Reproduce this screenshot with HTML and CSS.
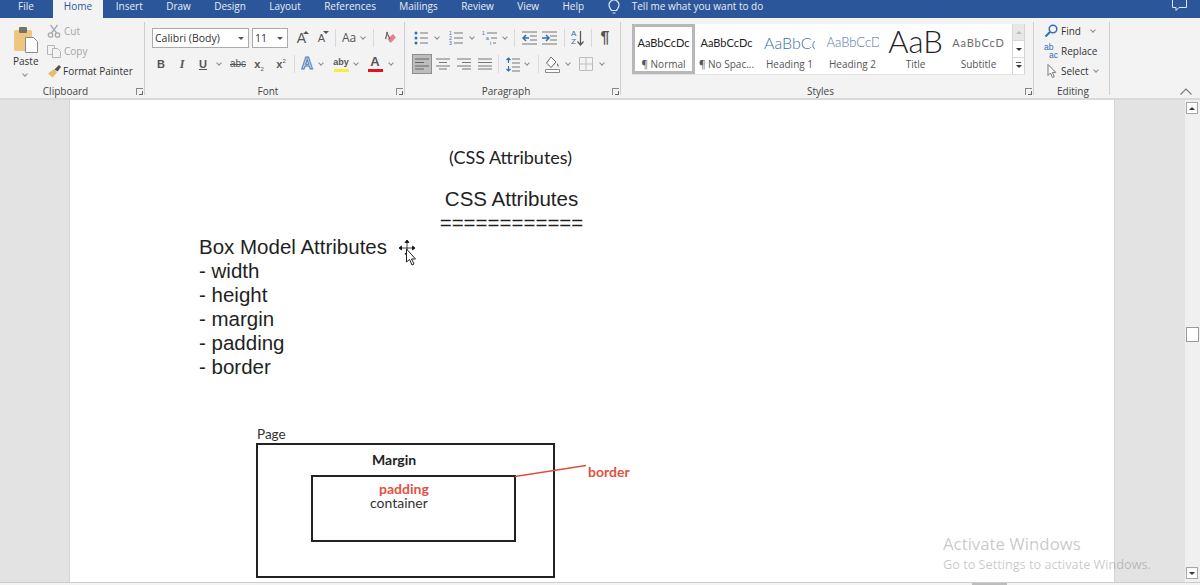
FILE: index.html
```html
<!DOCTYPE html>
<html lang="en">
<head>
    <meta charset="UTF-8">
    <meta name="viewport" content="width=device-width, initial-scale=1.0">
    <title>Document - Word</title>
    <link rel="stylesheet" href="styles.css">
</head>
<body>
    <!-- Tabs -->
    <header class="tabs">
        <span class="tab tab-file">File</span>
        <span class="tab tab-active">Home</span>
        <span class="tab">Insert</span>
        <span class="tab">Draw</span>
        <span class="tab">Design</span>
        <span class="tab">Layout</span>
        <span class="tab">References</span>
        <span class="tab">Mailings</span>
        <span class="tab">Review</span>
        <span class="tab">View</span>
        <span class="tab">Help</span>
        <svg class="bulb" width="12" height="15" viewBox="0 0 12 15"><path d="M3.500 10.500C2.500 8.500 1 7.500 1 5a5 5 0 0 1 10 0c0 2.500-1.500 3.500-2.500 5.500zM4.500 13h3" fill="none" stroke="#dfe7f3" stroke-width="1.200"/></svg>
        <span class="tell">Tell me what you want to do</span>
        <svg class="comment" width="15" height="11" viewBox="0 0 15 11"><path d="M.5 0v7.500h3.500v3l3-3h7.500V0" fill="none" stroke="#dfe7f3"/></svg>
    </header>

    <!-- Ribbon -->
    <section class="ribbon">
        <div class="group group-clip">
            <div class="group-body clip-body">
                <div class="paste">
                    <svg width="26" height="27" viewBox="0 0 26 27">
                        <rect x="1" y="4" width="18" height="21" rx="1.500" fill="#eec77e"/>
                        <rect x="6" y="1" width="8" height="6" rx="1" fill="#77736c"/>
                        <path d="M12.500 11.500h8l4 4v11h-12z" fill="#fff" stroke="#8a8a8a"/>
                    </svg>
                    <span>Paste</span>
                    <i class="chev"></i>
                </div>
                <div class="clip-list">
                    <div class="clip-item off">
                        <svg width="14" height="14" viewBox="0 0 14 14"><g fill="none" stroke="#a9a9a9" stroke-width="1.300"><circle cx="3.500" cy="11" r="2.200"/><circle cx="10.500" cy="11" r="2.200"/><path d="M4.500 9 10.500 1M9.500 9 3.500 1"/></g></svg>
                        <span>Cut</span>
                    </div>
                    <div class="clip-item off">
                        <svg width="14" height="14" viewBox="0 0 14 14"><g fill="#f3f3f3" stroke="#b5b5b5"><path d="M.5 1.500h7v9h-7z"/><path d="M5.500 4.500h5l3 3v6h-8z"/></g></svg>
                        <span>Copy</span>
                    </div>
                    <div class="clip-item">
                        <svg width="15" height="14" viewBox="0 0 15 14"><path d="M1 9.500 7 5l3 3.500-4.500 5z" fill="#e5bd6b"/><path d="M7.500 5.500 12 1l2 2-3.500 4.500z" fill="#55514a"/></svg>
                        <span>Format Painter</span>
                    </div>
                </div>
            </div>
            <div class="group-label"><span></span><span>Clipboard</span><i class="launcher"></i></div>
        </div>

        <div class="group">
            <div class="group-body tools">
                <div class="row">
                    <div class="combo combo-font"><span>Calibri (Body)</span><i class="caret"></i></div>
                    <div class="combo combo-size m3"><span>11</span><i class="caret"></i></div>
                    <span class="ico w15 m6 big-a">A<sup class="up"></sup></span>
                    <span class="ico w15 m5 small-a">A<sup class="down"></sup></span>
                    <i class="sep m6"></i>
                    <span class="ico w14 m6 aa">Aa</span>
                    <i class="chev m3"></i>
                    <i class="sep m7"></i>
                    <svg class="m8" width="14" height="15" viewBox="0 0 14 15"><path d="M5.500 8 11 3l3 3.500L8.500 12z" fill="#e57f8a"/><path d="M3.500 8 5.500 1" stroke="#6b6b6b" stroke-width="1.300"/><path d="M4.500 1 8 8" stroke="#6b6b6b" stroke-width="1.300"/></svg>
                </div>
                <div class="row">
                    <span class="ico w12 m3 bold">B</span>
                    <span class="ico w12 m9 ital">I</span>
                    <span class="ico w12 m9 under">U</span>
                    <i class="chev m6"></i>
                    <span class="ico w20 m6 strike">abc</span>
                    <span class="ico w12 m5 bold">x<sub>2</sub></span>
                    <span class="ico w12 m10 bold">x<sup>2</sup></span>
                    <i class="sep m7"></i>
                    <span class="ico w14 m5 effect">A</span>
                    <i class="chev m3"></i>
                    <span class="ico w16 m9 mark"><small>aby</small><b class="bar bar-yellow"></b></span>
                    <i class="chev m3"></i>
                    <span class="ico w16 m8 mark"><em>A</em><b class="bar bar-red"></b></span>
                    <i class="chev m4"></i>
                </div>
            </div>
            <div class="group-label"><span></span><span>Font</span><i class="launcher"></i></div>
        </div>

        <div class="group group-para">
            <div class="group-body tools">
                <div class="row">
                    <svg class="m2" width="14" height="14" viewBox="0 0 14 14"><g fill="#2f6fb3"><circle cx="2" cy="2" r="1.500"/><circle cx="2" cy="7" r="1.500"/><circle cx="2" cy="12" r="1.500"/></g><path d="M6 2h8M6 7h8M6 12h8" stroke="#777"/></svg>
                    <i class="chev m5"></i>
                    <svg class="m9" width="14" height="14" viewBox="0 0 14 14"><g fill="#2f6fb3" font-size="5" font-family="Liberation Sans, sans-serif"><text x="0" y="4">1</text><text x="0" y="9">2</text><text x="0" y="14">3</text></g><path d="M5 2h9M5 7h9M5 12h9" stroke="#777"/></svg>
                    <i class="chev m5"></i>
                    <svg class="m7" width="15" height="14" viewBox="0 0 15 14"><g fill="#2f6fb3" font-size="5" font-family="Liberation Sans, sans-serif"><text x="0" y="4">1</text><text x="4" y="9">a</text><text x="8" y="14">i</text></g><path d="M5 2h10M9 7h6M11 12h3" stroke="#777"/></svg>
                    <i class="chev m4"></i>
                    <i class="sep m6"></i>
                    <svg class="m7" width="15" height="14" viewBox="0 0 15 14"><path d="M0 1h15M0 13h15M8 5h7M8 9h7" stroke="#777"/><path d="M7 7H1M4 4 1 7l3 3" fill="none" stroke="#2f6fb3" stroke-width="1.500"/></svg>
                    <svg class="m5" width="15" height="14" viewBox="0 0 15 14"><path d="M0 1h15M0 13h15M8 5h7M8 9h7" stroke="#777"/><path d="M0 7h6M4 4l3 3-3 3" fill="none" stroke="#2f6fb3" stroke-width="1.500"/></svg>
                    <i class="sep m7"></i>
                    <span class="sort m6"><span class="sort-az">A<br>Z</span><svg width="7" height="15" viewBox="0 0 7 15"><path d="M3.500 0v14M.5 10.500l3 3.500 3-3.500" fill="none" stroke="#555" stroke-width="1.200"/></svg></span>
                    <i class="sep m6"></i>
                    <span class="ico w12 m7 pilcrow">¶</span>
                </div>
                <div class="row">
                    <span class="align-on"><svg width="14" height="12" viewBox="0 0 14 12"><path d="M0 1h14M0 4.500h9M0 8h14M0 11h9" stroke="#666"/></svg></span>
                    <svg class="m4" width="14" height="12" viewBox="0 0 14 12"><path d="M0 1h14M3 4.500h8M0 8h14M3 11h8" stroke="#777"/></svg>
                    <svg class="m7" width="14" height="12" viewBox="0 0 14 12"><path d="M0 1h14M5 4.500h9M0 8h14M5 11h9" stroke="#777"/></svg>
                    <svg class="m7" width="14" height="12" viewBox="0 0 14 12"><path d="M0 1h14M0 4.500h14M0 8h14M0 11h14" stroke="#777"/></svg>
                    <i class="sep m6"></i>
                    <svg class="m7" width="14" height="15" viewBox="0 0 14 15"><path d="M6 2h8M6 6h8M6 10h8M6 14h8" stroke="#777"/><path d="M2.500 1v5M.5 3l2-2 2 2" fill="none" stroke="#2f6fb3" stroke-width="1.200"/><path d="M2.500 9v5M.5 12l2 2 2-2" fill="none" stroke="#2f6fb3" stroke-width="1.200"/></svg>
                    <i class="chev m3"></i>
                    <i class="sep m8"></i>
                    <svg class="m6" width="15" height="17" viewBox="0 0 15 17"><path d="M6 1 1.500 7 6 11.500 11 6z" fill="#fff" stroke="#666"/><path d="M12 7c1.500 1.500 2 3 1.500 3.500s-1.500 0-1.500-3.500z" fill="#666"/><path d="M.5 13.500h14v3H.5z" fill="#fff" stroke="#8a8a8a"/></svg>
                    <i class="chev m4"></i>
                    <svg class="m8" width="14" height="14" viewBox="0 0 14 14"><path d="M.5.500h13v13H.5zM7 .5v13M.5 7h13" fill="none" stroke="#bdbdbd"/></svg>
                    <i class="chev m5"></i>
                </div>
            </div>
            <div class="group-label"><span></span><span>Paragraph</span><i class="launcher"></i></div>
        </div>

        <div class="group group-styles">
            <div class="group-body">
                <div class="gallery">
                    <div class="style style-on"><div class="preview pv-normal">AaBbCcDc</div><div class="style-name">¶ Normal</div></div>
                    <div class="style"><div class="preview pv-normal">AaBbCcDc</div><div class="style-name">¶ No Spac...</div></div>
                    <div class="style"><div class="preview pv-h1">AaBbCc</div><div class="style-name">Heading 1</div></div>
                    <div class="style"><div class="preview pv-h2">AaBbCcD</div><div class="style-name">Heading 2</div></div>
                    <div class="style"><div class="preview pv-title">AaB</div><div class="style-name">Title</div></div>
                    <div class="style"><div class="preview pv-sub">AaBbCcD</div><div class="style-name">Subtitle</div></div>
                    <div class="gallery-scroll">
                        <span class="gs gs-up"><i class="tri-up"></i></span>
                        <span class="gs"><i class="tri-down"></i></span>
                        <span class="gs gs-more"><i class="tri-down"></i></span>
                    </div>
                </div>
            </div>
            <div class="group-label"><span></span><span>Styles</span><i class="launcher"></i></div>
        </div>

        <div class="group group-edit">
            <div class="group-body edit-list">
                <div class="edit-item">
                    <svg width="14" height="14" viewBox="0 0 14 14"><circle cx="9" cy="5" r="3.800" fill="none" stroke="#2f6fb3" stroke-width="1.500"/><path d="M6 8 1.500 12.500" stroke="#2f6fb3" stroke-width="2"/></svg>
                    <span>Find</span><i class="chev"></i>
                </div>
                <div class="edit-item">
                    <span class="replace-ico"><span>ab</span><span>ac</span></span>
                    <span>Replace</span>
                </div>
                <div class="edit-item">
                    <svg width="14" height="14" viewBox="0 0 14 14"><path d="M4 .5v11l2.500-2.500 2 4.500 1.800-.8-2-4.300h3.500z" fill="#fff" stroke="#777"/></svg>
                    <span>Select</span><i class="chev"></i>
                </div>
            </div>
            <div class="group-label"><span>Editing</span></div>
        </div>

        <svg class="collapse" width="12" height="7" viewBox="0 0 12 7"><path d="M.5 6.500 6 1l5.500 5.500" fill="none" stroke="#777" stroke-width="1.100"/></svg>
    </section>

    <!-- Document area -->
    <main class="workspace">
        <div class="margin-left"></div>
        <article class="page">
            <p class="cal-title">(CSS Attributes)</p>
            <div class="heading">
                <p>CSS Attributes</p>
                <p>============</p>
            </div>
            <ul class="attrs">
                <li>Box Model Attributes</li>
                <li>- width</li>
                <li>- height</li>
                <li>- margin</li>
                <li>- padding</li>
                <li>- border</li>
            </ul>
            <figure class="diagram">
                <figcaption>Page</figcaption>
                <div class="box-page">
                    <div class="label-margin">Margin</div>
                    <div class="box-container">
                        <div class="label-padding">padding</div>
                        <div class="label-container">container</div>
                    </div>
                </div>
                <svg class="border-line" width="72" height="14" viewBox="0 0 72 14"><path d="M0 12.500 71 1.500" stroke="#d9503f" stroke-width="1.500"/></svg>
                <span class="label-border">border</span>
            </figure>
            <!-- Курсор -->
            <svg class="cursor" width="20" height="28" viewBox="0 0 20 28">
                <path d="M8 1v14M1 8h14M8 0 6 2.500h4zM8 16l-2-2.500h4zM0 8l2.500-2v4zM16 8l-2.500-2v4z" fill="#111" stroke="#111" stroke-width=".8"/>
                <path d="M7.500 9v13l3-2.500 2.500 5.500 2-1-2.500-5h4z" fill="#fff" stroke="#222"/>
            </svg>
        </article>
        <div class="margin-right"></div>
        <aside class="vscroll">
            <span class="sb-btn"><i class="tri-up"></i></span>
            <span class="sb-thumb"></span>
            <span class="sb-btn"><i class="tri-down"></i></span>
        </aside>
    </main>

    <footer class="hscroll"><span class="hthumb"></span></footer>

    <div class="activate">
        <div class="activate-title">Activate Windows</div>
        <div class="activate-sub">Go to Settings to activate Windows.</div>
    </div>
</body>
</html>
```

FILE: styles.css
```css
* {
    box-sizing: border-box;
}

html, body {
    height: 585px;
    overflow: hidden;
}

body {
    margin: 0;
    position: relative;
    display: flex;
    flex-direction: column;
    font-family: "Open Sans", sans-serif;
    color: #444;
    background: #f3f3f3;
}

p {
    margin: 0;
}

/* Tabs */
.tabs {
    height: 18px;
    flex: none;
    display: flex;
    align-items: flex-start;
    background: #2b579a;
    color: #e6ecf5;
    font-size: 10px;
    line-height: 12px;
    overflow: hidden;
}

.tab {
    padding: 0 11.700px;
    height: 18px;
}

.tab-file {
    padding: 0 19px 0 18px;
}

.tab-active {
    padding: 0 11px;
    margin-right: 1px;
    background: #f3f3f3;
    color: #2b579a;
}

.bulb {
    margin: 0 0 0 12px;
    flex: none;
}

.tell {
    margin-left: 12px;
}

.comment {
    margin-left: auto;
    margin-right: 13px;
}

/* Ribbon */
.ribbon {
    height: 82px;
    flex: none;
    display: flex;
    position: relative;
    border-bottom: 2px solid #d9d9d9;
    font-size: 10px;
}

.group {
    width: 260px;
    display: flex;
    flex-direction: column;
    position: relative;
}

.group::after {
    content: "";
    position: absolute;
    right: 0;
    top: 4px;
    bottom: 3px;
    width: 1px;
    background: #cfcfcf;
}

.group-clip {
    width: 145px;
}

.group-para {
    width: 216px;
}

.group-styles {
    width: 413px;
}

.group-edit {
    width: 76px;
}

.group-body {
    height: 67px;
}

.group-label {
    height: 13px;
    display: grid;
    grid-template-columns: 1fr auto 1fr;
    padding-right: 14px;
    align-items: center;
    line-height: 13px;
    text-align: center;
    color: #444;
}

.group-edit .group-label {
    display: block;
    padding-right: 0;
    padding-left: 2px;
}

.launcher {
    justify-self: end;
    margin-right: -12px;
    width: 7px;
    height: 7px;
    border-left: 1px solid #888;
    border-top: 1px solid #888;
    position: relative;
}

.launcher::after {
    content: "";
    position: absolute;
    right: 0;
    bottom: 0;
    width: 3px;
    height: 3px;
    border-right: 1px solid #666;
    border-bottom: 1px solid #666;
}

/* Clipboard */
.clip-body {
    display: flex;
    padding-top: 8px;
}

.paste {
    width: 47px;
    padding-left: 13px;
    display: flex;
    flex-direction: column;
    align-items: flex-start;
    font-size: 10px;
    line-height: 14px;
    color: #333;
}

.paste svg {
    margin-bottom: 1px;
}

.paste .chev {
    margin: 4px 0 0 8px;
}

.clip-list {
    display: flex;
    flex-direction: column;
    gap: 6px;
    margin-top: -2px;
}

.clip-item {
    height: 14px;
    display: flex;
    align-items: center;
    gap: 1px;
    line-height: 14px;
    color: #333;
    white-space: nowrap;
    font-size: 10px;
}

.clip-item.off {
    color: #a5a5a5;
    gap: 3px;
}

/* Font and paragraph tools */
.tools {
    padding: 10px 0 0 7px;
    display: flex;
    flex-direction: column;
    gap: 6px;
}

.row {
    height: 20px;
    display: flex;
    align-items: center;
}

.row > * {
    flex: none;
}

.combo {
    height: 20px;
    display: flex;
    align-items: center;
    justify-content: space-between;
    padding: 0 4px 0 2px;
    background: #fff;
    border: 1px solid #ababab;
    font-size: 10.500px;
    color: #333;
}

.combo-font {
    width: 97px;
}

.combo-size {
    width: 36px;
}

.caret {
    border: 3px solid transparent;
    border-top: 3px solid #555;
    border-bottom: 0;
}

.chev {
    display: block;
    width: 7px;
    height: 5px;
    position: relative;
}

.chev::after {
    content: "";
    position: absolute;
    left: 2px;
    top: -.5px;
    width: 3px;
    height: 3px;
    border-right: 1px solid #8c8c8c;
    border-bottom: 1px solid #8c8c8c;
    transform: rotate(45deg);
}

.sep {
    width: 1px;
    height: 18px;
    background: #d8d8d8;
}

.ico {
    display: block;
    text-align: center;
    font-family: "Liberation Sans", sans-serif;
    color: #555;
    line-height: 20px;
    font-size: 12px;
    position: relative;
}

.w12 { width: 12px; }
.w14 { width: 14px; }
.w15 { width: 15px; }
.w16 { width: 16px; }
.w20 { width: 20px; }

.m2 { margin-left: 2px; }
.m3 { margin-left: 3px; }
.m4 { margin-left: 4px; }
.m5 { margin-left: 5px; }
.m6 { margin-left: 6px; }
.m7 { margin-left: 7px; }
.m8 { margin-left: 8px; }
.m9 { margin-left: 9px; }
.m10 { margin-left: 10px; }

.big-a {
    font-size: 14px;
}

.small-a {
    font-size: 11px;
}

.up, .down {
    position: absolute;
    top: 3px;
    right: 0;
    border: 3px solid transparent;
    border-top: 0;
    border-bottom: 3px solid #555;
}

.down {
    border-bottom: 0;
    border-top: 3px solid #555;
}

.aa {
    font-family: "Open Sans", sans-serif;
    font-size: 12px;
}

.bold {
    font-weight: bold;
    font-size: 11px;
}

.bold sub, .bold sup {
    font-size: 6px;
    line-height: 0;
    font-weight: normal;
}

.ital {
    font-style: italic;
    font-family: "Liberation Serif", serif;
    font-weight: bold;
    font-size: 12px;
}

.under {
    font-weight: bold;
    font-size: 11px;
    text-decoration: underline;
}

.strike {
    font-size: 10px;
    text-decoration: line-through;
}

.effect {
    font-size: 16px;
    font-weight: bold;
    color: #dce6f4;
    -webkit-text-stroke: 1px #4b7cbe;
}

.mark {
    height: 20px;
    display: flex;
    flex-direction: column;
    align-items: center;
    line-height: 12px;
    padding-top: 2px;
}

.mark small {
    font-size: 9px;
    font-weight: bold;
    height: 12px;
}

.mark em {
    font-style: normal;
    font-size: 13px;
    font-weight: bold;
    height: 12px;
}

.bar {
    width: 15px;
    height: 3px;
    margin-top: 1px;
}

.bar-yellow {
    background: #f7ee3b;
}

.bar-red {
    background: #e0141c;
}

.sort {
    width: 14px;
    display: flex;
    align-items: center;
    gap: 1px;
}

.sort-az {
    font-family: "Liberation Sans", sans-serif;
    font-size: 8px;
    line-height: 8px;
    color: #2f6fb3;
}

.pilcrow {
    font-size: 16px;
    font-weight: bold;
    color: #555;
}

.align-on {
    width: 20px;
    height: 20px;
    display: flex;
    align-items: center;
    justify-content: center;
    background: #bdbdbd;
    border: 1px solid #8e8e8e;
}

/* Styles gallery */
.gallery {
    width: 393px;
    height: 51px;
    margin: 6px 0 0 11px;
    display: flex;
    background: #fff;
    border-bottom: 1px solid #e0e0e0;
}

.style {
    width: 63px;
    flex: none;
    padding-top: 6px;
    text-align: center;
    overflow: hidden;
}

.style-on {
    padding-top: 3px;
    border: 3px solid #b8b8b8;
    background: #fff;
}

.preview {
    height: 24px;
    display: flex;
    align-items: center;
    justify-content: center;
    overflow: hidden;
    white-space: nowrap;
    font-family: Lato, sans-serif;
}

.pv-normal {
    font-size: 11px;
    color: #222;
}

.pv-h1 {
    width: 51px;
    margin: 0 auto;
    font-size: 16px;
    color: #3a6ea5;
    font-weight: 300;
    justify-content: flex-start;
}

.pv-h2 {
    width: 52px;
    margin: 0 auto;
    font-size: 13px;
    color: #4a78ab;
    font-weight: 300;
    justify-content: flex-start;
}

.pv-title {
    font-size: 31px;
    font-weight: 300;
    line-height: 22px;
    color: #222;
    align-items: flex-start;
}

.pv-sub {
    font-size: 11px;
    letter-spacing: .8px;
    color: #6b6b6b;
}

.style-name {
    margin-top: 3px;
    font-size: 10px;
    line-height: 14px;
    color: #555;
    white-space: nowrap;
}

.gallery-scroll {
    width: 13px;
    margin-left: 2px;
    display: flex;
    flex-direction: column;
    background: #fff;
    border-left: 1px solid #d6d6d6;
    border-right: 1px solid #d6d6d6;
}

.gs {
    flex: 1;
    display: flex;
    align-items: center;
    justify-content: center;
    border-bottom: 1px solid #d6d6d6;
}

.gs-up {
    background: #e8e8e8;
}

.gs-up .tri-up {
    border-bottom-color: #bbb;
}

.gs-more {
    border-bottom: 0;
    position: relative;
}

.gs-more::before {
    content: "";
    position: absolute;
    top: 4px;
    left: 3px;
    width: 5px;
    height: 1px;
    background: #555;
}

.tri-up, .tri-down {
    display: block;
    border: 3px solid transparent;
    border-top: 0;
    border-bottom: 3px solid #333;
}

.tri-down {
    border-bottom: 0;
    border-top: 3px solid #333;
}

/* Editing */
.edit-list {
    padding: 6px 0 0 10px;
    display: flex;
    flex-direction: column;
    gap: 6px;
}

.edit-item {
    height: 14px;
    display: flex;
    align-items: center;
    gap: 3px;
    line-height: 14px;
    color: #333;
    font-size: 10px;
}

.edit-item .chev {
    margin-left: 5px;
}

.edit-item:last-child .chev {
    margin-left: 0;
}

.replace-ico {
    width: 14px;
    display: flex;
    flex-direction: column;
    font-family: "Liberation Sans", sans-serif;
    font-size: 8.500px;
    line-height: 8px;
    color: #2f6fb3;
}

.replace-ico span:last-child {
    align-self: flex-end;
}

.collapse {
    position: absolute;
    left: 1180px;
    top: 70px;
}

/* Document area */
.workspace {
    height: 482px;
    flex: none;
    display: flex;
    background: #e3e3e3;
}

.margin-left {
    width: 70px;
    flex: none;
    border-right: 1px solid #d6d6d6;
}

.page {
    width: 1044px;
    flex: none;
    padding: 45px 0 0 129px;
    position: relative;
    background: #fff;
    color: #1d1d1d;
    overflow: hidden;
}

.cal-title {
    width: 623px;
    text-align: center;
    font-family: Lato, sans-serif;
    font-size: 18px;
    line-height: 24px;
    color: #222;
}

.heading {
    width: 625px;
    margin-top: 18px;
    text-align: center;
}

.heading, .attrs {
    font-family: "Liberation Sans", sans-serif;
    font-size: 20.500px;
    line-height: 24px;
    color: #1f1f1f;
}

.attrs {
    margin: 0;
    padding: 0;
    list-style: none;
}

.diagram {
    margin: 48px 0 0 57px;
    position: relative;
    width: 380px;
}

.diagram figcaption {
    font-family: Lato, sans-serif;
    font-size: 13.500px;
    line-height: 14px;
    height: 16px;
    padding-left: 1px;
    color: #333;
}

.box-page {
    width: 299px;
    height: 135px;
    border: 2px solid #222;
    padding-top: 6px;
}

.label-margin {
    padding-left: 114px;
    height: 24px;
    font-family: Lato, sans-serif;
    font-weight: bold;
    font-size: 14px;
    line-height: 18px;
    color: #222;
}

.box-container {
    width: 205px;
    height: 67px;
    margin-left: 53px;
    border: 2px solid #222;
    padding-top: 5px;
    font-family: Lato, sans-serif;
    font-size: 14px;
}

.label-padding {
    padding-left: 66px;
    font-weight: bold;
    line-height: 14px;
    color: #e2513f;
}

.label-container {
    padding-left: 57px;
    line-height: 14px;
    color: #333;
}

.border-line {
    position: absolute;
    left: 259px;
    top: 37px;
}

.label-border {
    position: absolute;
    left: 332px;
    top: 36px;
    font-family: Lato, sans-serif;
    font-weight: bold;
    font-size: 14px;
    line-height: 18px;
    color: #e2513f;
}

.cursor {
    position: absolute;
    left: 329px;
    top: 140px;
}

.margin-right {
    width: 71px;
    flex: none;
    border-left: 1px solid #d6d6d6;
}

.vscroll {
    width: 15px;
    flex: none;
    padding: 2px 2px 3px 1px;
    display: flex;
    flex-direction: column;
    align-items: center;
    background: #f0f0f0;
}

.sb-btn {
    width: 12px;
    height: 12px;
    flex: none;
    display: flex;
    align-items: center;
    justify-content: center;
    background: #fff;
    border: 1px solid #a5a5a5;
}

.sb-thumb {
    width: 13px;
    height: 15px;
    flex: none;
    margin: 213px 0 auto;
    background: #fff;
    border: 1px solid #9a9a9a;
}

.hscroll {
    flex: 1;
    position: relative;
    background: #f3f3f3;
    border-top: 1px solid #cdcdcd;
}

.hthumb {
    position: absolute;
    left: 972px;
    top: 0;
    width: 35px;
    height: 2px;
    background: #bcbcbc;
}

/* Watermark */
.activate {
    position: absolute;
    left: 943px;
    top: 533px;
    white-space: nowrap;
    color: rgba(110, 110, 110, 0.38);
}

.activate-title {
    font-size: 16.800px;
    line-height: 22px;
}

.activate-sub {
    font-size: 12.700px;
    line-height: 18px;
}
```
